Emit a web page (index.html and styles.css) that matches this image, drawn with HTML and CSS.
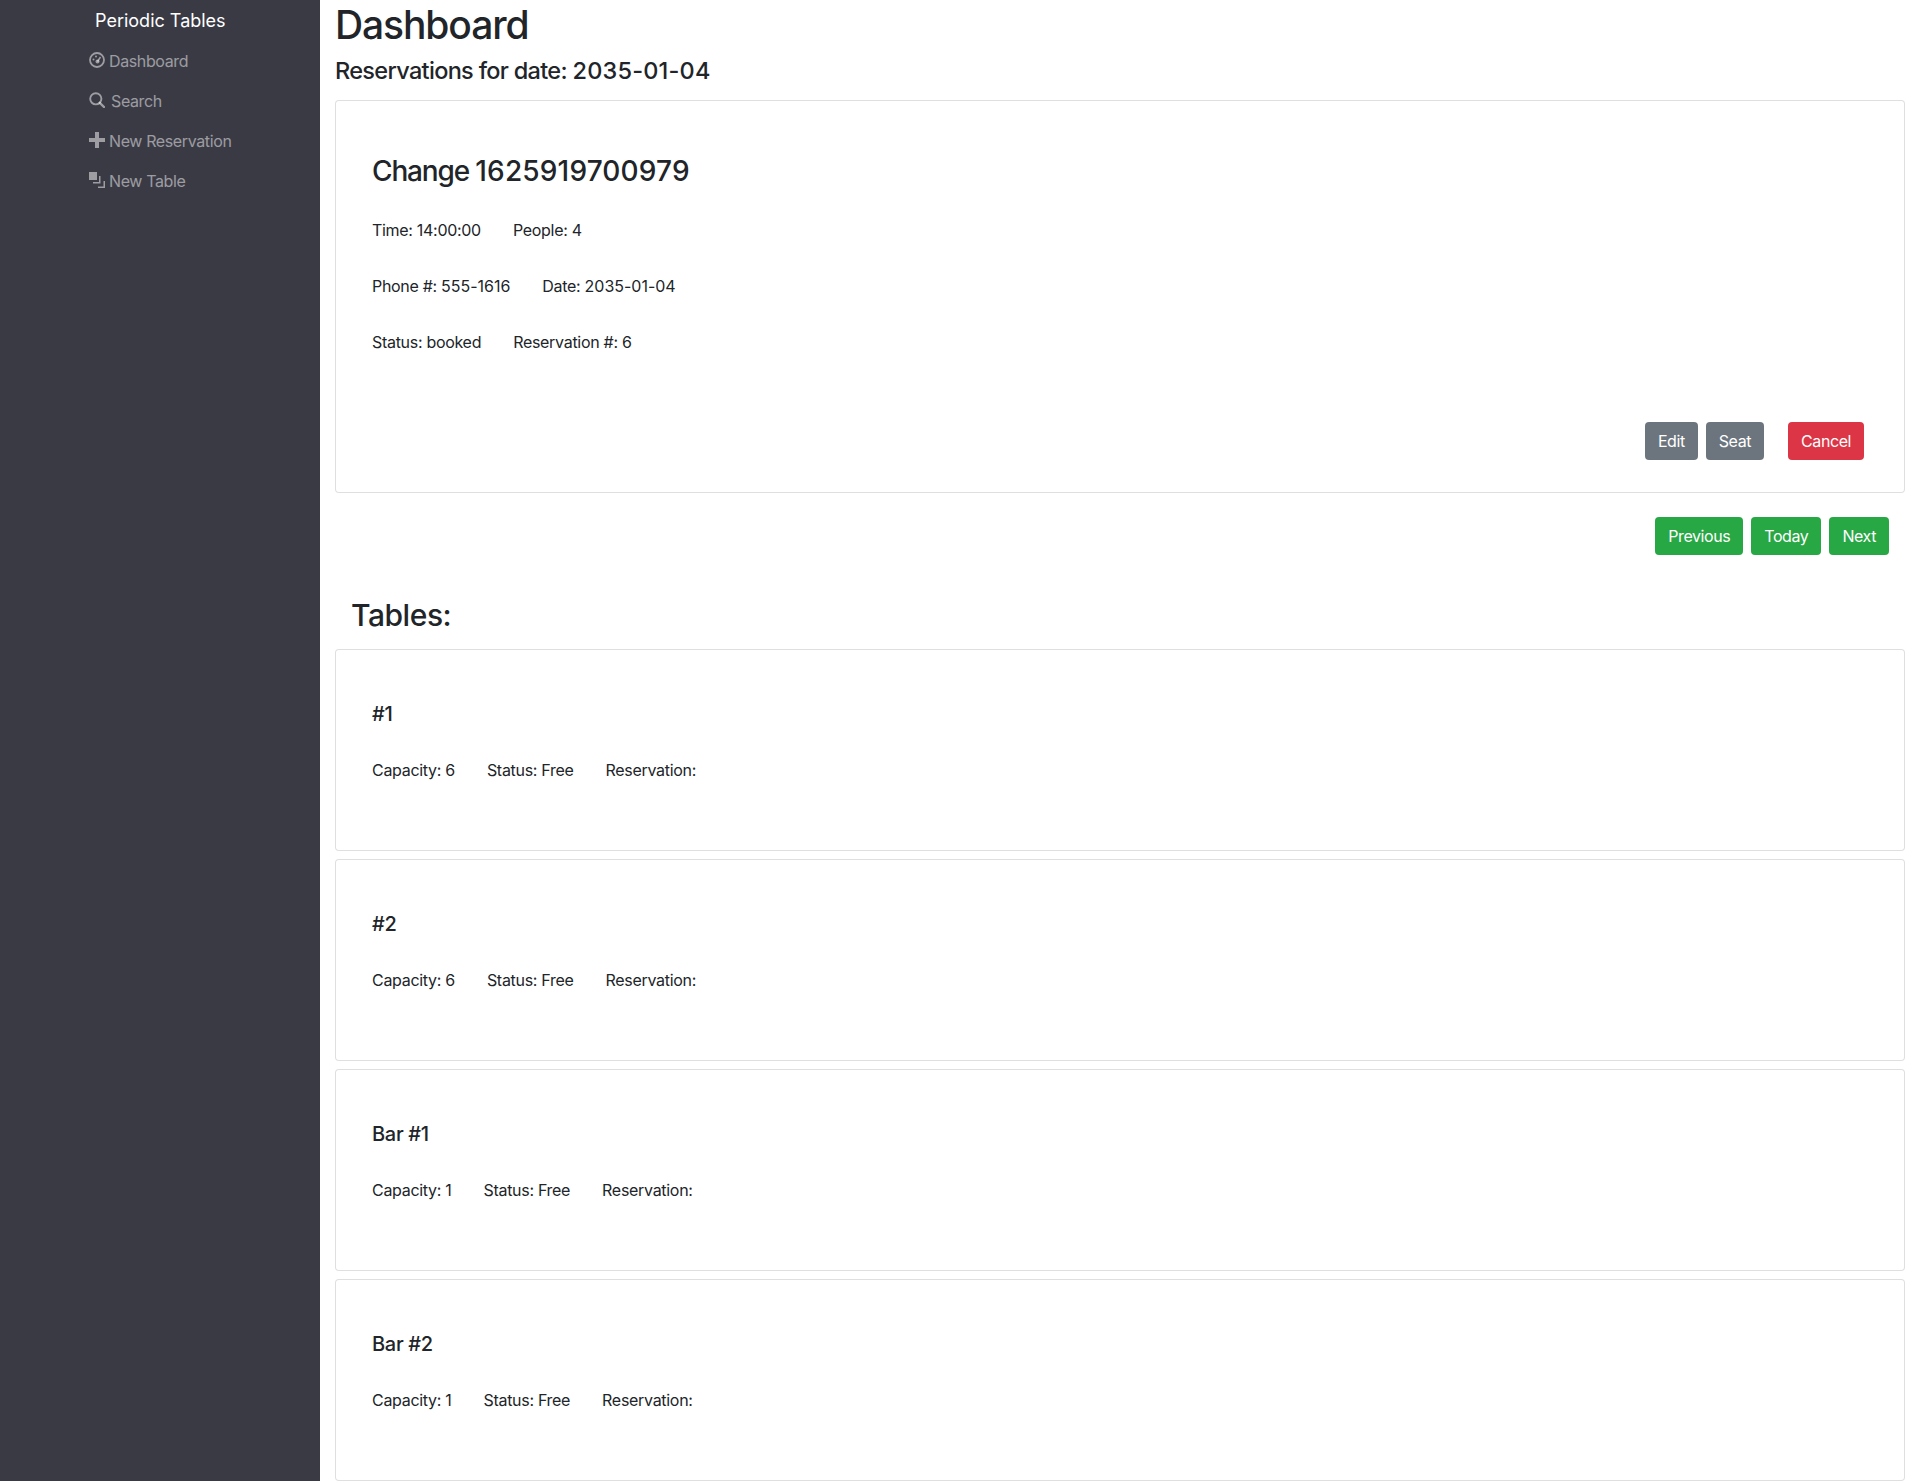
FILE: index.html
```html
<!DOCTYPE html>
<html lang="en">
<head>
<meta charset="utf-8">
<title>Periodic Tables</title>
<link rel="stylesheet" href="styles.css">
</head>
<body>
<div class="layout">
  <aside class="sidebar">
    <div class="side-inner">
      <div class="brand">Periodic Tables</div>
      <a class="nav-link">
        <svg class="ico" viewBox="0 0 16 16"><circle cx="8" cy="8" r="7" fill="none" stroke="currentColor" stroke-width="1.8"/><circle cx="8.500" cy="9.500" r="2" fill="currentColor"/><path d="M8.500 9.500 11.500 5" stroke="currentColor" stroke-width="1.500"/><circle cx="4.500" cy="7.500" r="1" fill="currentColor"/><circle cx="7" cy="4.500" r="1" fill="currentColor"/></svg>
        <span>Dashboard</span>
      </a>
      <a class="nav-link">
        <svg class="ico" viewBox="0 0 16 16"><circle cx="6.800" cy="6.800" r="5.600" fill="none" stroke="currentColor" stroke-width="1.900"/><path d="M10.800 10.800 15 15" stroke="currentColor" stroke-width="2.400" stroke-linecap="round"/></svg>
        <span class="search-label">Search</span>
      </a>
      <a class="nav-link">
        <svg class="ico" viewBox="0 0 16 16"><path d="M6 0h4v6h6v4h-6v6H6v-6H0V6h6z" fill="currentColor"/></svg>
        <span>New Reservation</span>
      </a>
      <a class="nav-link">
        <svg class="ico" viewBox="0 0 16 16"><path d="M0 0h8v8H0z" fill="currentColor"/><path d="M10 4h1.500v7.500H4V10h6zM14.500 9H16v7H9v-1.500h5.500z" fill="currentColor"/></svg>
        <span>New Table</span>
      </a>
    </div>
  </aside>
  <main class="main">
    <h1 class="title">Dashboard</h1>
    <h4 class="subtitle">Reservations for date: <span class="num">2035-01-04</span></h4>
    <section class="card res-card">
      <h3 class="res-name">Change <span class="num">1625919700979</span></h3>
      <div class="row"><span>Time: 14:00:00</span><span>People: 4</span></div>
      <div class="row"><span>Phone #: <span class="phone">555-1616</span></span><span>Date: <span class="phone">2035-01-04</span></span></div>
      <div class="row"><span>Status: booked</span><span>Reservation #: 6</span></div>
      <div class="res-actions">
        <a class="btn grey">Edit</a>
        <a class="btn grey">Seat</a>
        <a class="btn red">Cancel</a>
      </div>
    </section>
    <div class="date-nav">
      <a class="btn green">Previous</a>
      <a class="btn green">Today</a>
      <a class="btn green">Next</a>
    </div>
    <h2 class="tables-title">Tables:</h2>
    <section class="card table-card">
      <h5 class="table-name">#1</h5>
      <div class="row"><span>Capacity: 6</span><span>Status: Free</span><span>Reservation:</span></div>
    </section>
    <section class="card table-card">
      <h5 class="table-name">#2</h5>
      <div class="row"><span>Capacity: 6</span><span>Status: Free</span><span>Reservation:</span></div>
    </section>
    <section class="card table-card">
      <h5 class="table-name">Bar #1</h5>
      <div class="row"><span>Capacity: 1</span><span>Status: Free</span><span>Reservation:</span></div>
    </section>
    <section class="card table-card">
      <h5 class="table-name">Bar #2</h5>
      <div class="row"><span>Capacity: 1</span><span>Status: Free</span><span>Reservation:</span></div>
    </section>
  </main>
</div>
</body>
</html>
```
FILE: styles.css
```css
* { box-sizing: border-box; }
html, body { margin: 0; padding: 0; height: 100%; }
body {
  font-family: Inter, "Liberation Sans", sans-serif;
  font-size: 16px;
  line-height: 1.5;
  color: #212529;
  background: #fff;
  overflow: hidden;
}
.layout { display: flex; min-height: 1481px; }
.sidebar { flex: 0 0 320px; background: #3a3a45; }
.side-inner { padding: 0 0 0 89px; }
.brand {
  color: #fff;
  font-size: 18px;
  line-height: 27px;
  padding: 7px 0 0 6px;
  margin-bottom: 7px;
}
.nav-link {
  display: flex;
  align-items: center;
  gap: 4px;
  height: 40px;
  color: rgba(255, 255, 255, .5);
  font-size: 16px;
  letter-spacing: -.38px;
}
.ico { width: 16px; height: 16px; margin-top: -2px; flex: none; }
.search-label { margin-left: 2px; }
.main { flex: 1; padding: 0 15px; min-width: 0; }
.title { margin: 0; padding-top: 1px; font-size: 39px; line-height: 48px; font-weight: 500; letter-spacing: -1.100px; }
.subtitle { margin: 7px 0 0; font-size: 23.500px; line-height: 29px; font-weight: 500; letter-spacing: -.680px; }
.subtitle .num { letter-spacing: .180px; }
.card { border: 1px solid rgba(0, 0, 0, .125); border-radius: 4px; background: #fff; }
.res-card { margin-top: 15px; height: 393px; padding: 53px 36px 0; }
.res-name { margin: 0 0 30px; font-size: 28px; line-height: 34px; font-weight: 500; letter-spacing: -1.150px; }
.res-name .num { letter-spacing: .160px; }
.row { display: flex; gap: 32px; line-height: 24px; margin-bottom: 32px; letter-spacing: -.300px; }
.phone { letter-spacing: -.020px; }
.res-actions { display: flex; justify-content: flex-end; gap: 8px; margin: 68px 4px 0 0; }
.res-actions .red { margin-left: 16px; }
.btn {
  display: inline-block;
  padding: 6px 12px;
  border: 1px solid transparent;
  border-radius: 4px;
  color: #fff;
  font-size: 16px;
  line-height: 24px;
  letter-spacing: -.420px;
}
.grey { background: #6c757d; }
.red { background: #dc3545; }
.green { background: #28a745; }
.date-nav { display: flex; justify-content: flex-end; gap: 8px; margin: 24px 16px 0 0; }
.tables-title { margin: 41px 0 15px 16px; font-size: 30px; line-height: 38px; font-weight: 500; letter-spacing: -.450px; }
.table-card { height: 202px; padding: 52px 36px 0; margin-bottom: 8px; }
.table-name { margin: 0 0 32px; font-size: 20px; line-height: 24px; font-weight: 500; letter-spacing: -.300px; }
```
